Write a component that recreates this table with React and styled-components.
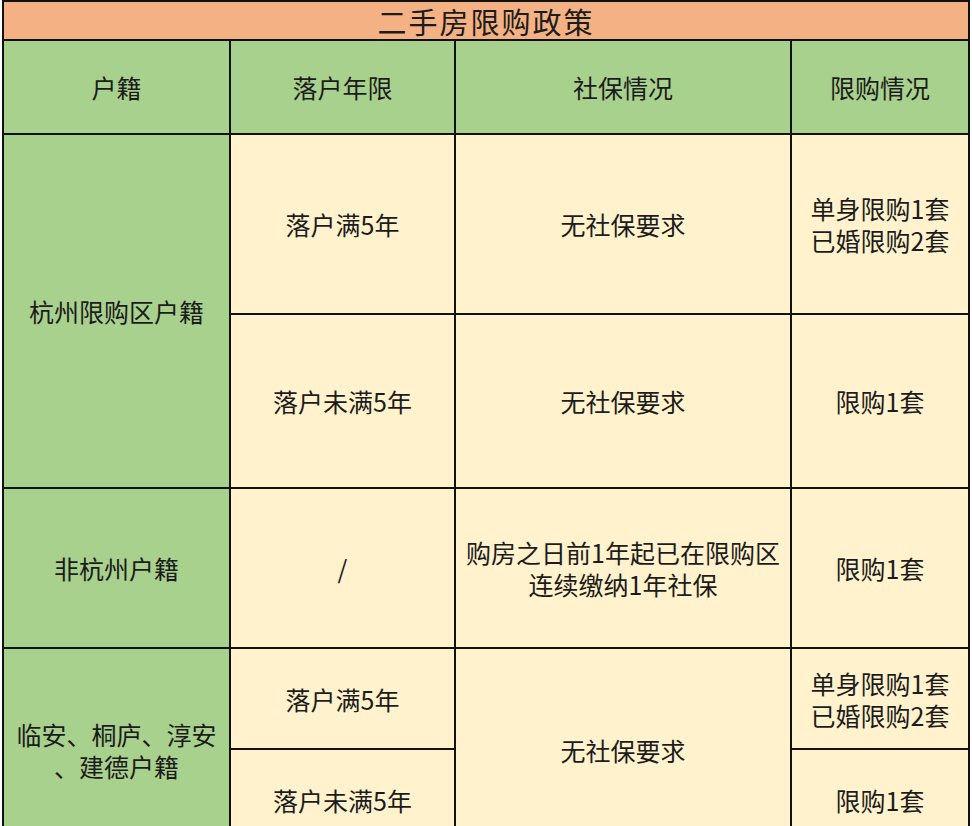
import styled, { createGlobalStyle } from "styled-components";

const GlobalStyle = createGlobalStyle`
    html, body {
        margin: 0;
        padding: 0;
        background: #ffffff;
        overflow: hidden;
    }
    body {
        font-family: "Noto Sans CJK SC", "Noto Sans", sans-serif;
    }
`;

const Page = styled.div`
    padding: 0 0 0 2px;
`;

const Table = styled.div`
    display: grid;
    grid-template-columns: 225px 223px 334px 176px;
    grid-template-rows: 37px 92px 178px 172px 158px 99px 100px;
    gap: 2px;
    padding: 2px;
    width: fit-content;
    background: #111111;
`;

const colors = {
    title: "#f4b183",
    head: "#a9d18e",
    side: "#a9d18e",
    body: "#fff2cc",
};

const Cell = styled.div`
    display: flex;
    align-items: center;
    justify-content: center;
    text-align: center;
    background: ${(p) => colors[p.$tone || "body"]};
    color: #1c1c1c;
    font-size: 25px;
    line-height: 32px;
    grid-column: ${(p) => p.$col || "auto"};
    grid-row: ${(p) => p.$row || "auto"};
`;

const Title = styled(Cell)`
    grid-column: 1 / -1;
    font-size: 29px;
    letter-spacing: 2px;
    line-height: 34px;
    overflow: visible;
`;

function App() {
    return (
        <Page>
            <GlobalStyle />
            <Table>
                <Title $tone="title">二手房限购政策</Title>

                <Cell $tone="head">户籍</Cell>
                <Cell $tone="head">落户年限</Cell>
                <Cell $tone="head">社保情况</Cell>
                <Cell $tone="head">限购情况</Cell>

                <Cell $tone="side" $col="1" $row="3 / 5">
                    杭州限购区户籍
                </Cell>
                <Cell $col="2" $row="3">落户满5年</Cell>
                <Cell $col="3" $row="3">无社保要求</Cell>
                <Cell $col="4" $row="3">
                    单身限购1套
                    <br />
                    已婚限购2套
                </Cell>
                <Cell $col="2" $row="4">落户未满5年</Cell>
                <Cell $col="3" $row="4">无社保要求</Cell>
                <Cell $col="4" $row="4">限购1套</Cell>

                <Cell $tone="side" $col="1" $row="5">
                    非杭州户籍
                </Cell>
                <Cell $col="2" $row="5">/</Cell>
                <Cell $col="3" $row="5">
                    购房之日前1年起已在限购区
                    <br />
                    连续缴纳1年社保
                </Cell>
                <Cell $col="4" $row="5">限购1套</Cell>

                <Cell $tone="side" $col="1" $row="6 / 8">
                    临安、桐庐、淳安
                    <br />
                    、建德户籍
                </Cell>
                <Cell $col="2" $row="6">落户满5年</Cell>
                <Cell $col="3" $row="6 / 8">无社保要求</Cell>
                <Cell $col="4" $row="6">
                    单身限购1套
                    <br />
                    已婚限购2套
                </Cell>
                <Cell $col="2" $row="7">落户未满5年</Cell>
                <Cell $col="4" $row="7">限购1套</Cell>
            </Table>
        </Page>
    );
}

export default App;
